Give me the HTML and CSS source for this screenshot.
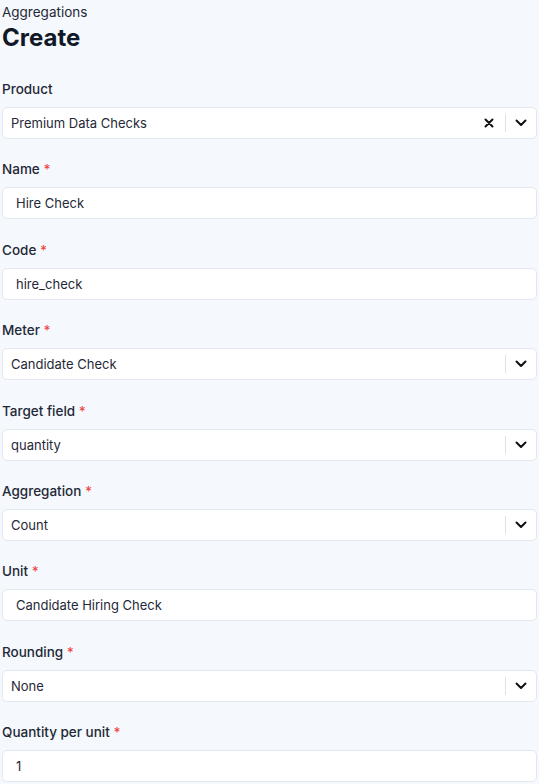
FILE: index.html
```html
<!DOCTYPE html>
<html lang="en">
<head>
  <meta charset="UTF-8" />
  <meta name="viewport" content="width=device-width, initial-scale=1" />
  <title>Create Aggregation</title>
  <link rel="stylesheet" href="styles.css">
</head>
<body>
  <div class="page">
    <div class="crumb">Aggregations</div>
    <h1 class="title">Create</h1>

    <form class="form" onsubmit="return false;">
      <div class="field">
        <label>Product</label>
        <div class="select">
          <span class="select-value">Premium Data Checks</span>
          <span class="clear">
            <svg width="10" height="10" viewBox="0 0 10 10"><path d="M1.5 1.5l7 7M8.5 1.5l-7 7" stroke="#111" stroke-width="2" stroke-linecap="round"/></svg>
          </span>
          <span class="sep"></span>
          <span class="chev">
            <svg width="12" height="8" viewBox="0 0 12 8"><path d="M1.5 1.5l4.5 4.5 4.5-4.5" fill="none" stroke="#111" stroke-width="2" stroke-linecap="round" stroke-linejoin="round"/></svg>
          </span>
        </div>
      </div>

      <div class="field">
        <label>Name <span class="req">*</span></label>
        <input class="input" type="text" value="Hire Check" />
      </div>

      <div class="field">
        <label>Code <span class="req">*</span></label>
        <input class="input" type="text" value="hire_check" />
      </div>

      <div class="field">
        <label>Meter <span class="req">*</span></label>
        <div class="select">
          <span class="select-value">Candidate Check</span>
          <span class="sep"></span>
          <span class="chev">
            <svg width="12" height="8" viewBox="0 0 12 8"><path d="M1.5 1.5l4.5 4.5 4.5-4.5" fill="none" stroke="#111" stroke-width="2" stroke-linecap="round" stroke-linejoin="round"/></svg>
          </span>
        </div>
      </div>

      <div class="field">
        <label>Target field <span class="req">*</span></label>
        <div class="select">
          <span class="select-value">quantity</span>
          <span class="sep"></span>
          <span class="chev">
            <svg width="12" height="8" viewBox="0 0 12 8"><path d="M1.5 1.5l4.5 4.5 4.5-4.5" fill="none" stroke="#111" stroke-width="2" stroke-linecap="round" stroke-linejoin="round"/></svg>
          </span>
        </div>
      </div>

      <div class="field">
        <label>Aggregation <span class="req">*</span></label>
        <div class="select">
          <span class="select-value">Count</span>
          <span class="sep"></span>
          <span class="chev">
            <svg width="12" height="8" viewBox="0 0 12 8"><path d="M1.5 1.5l4.5 4.5 4.5-4.5" fill="none" stroke="#111" stroke-width="2" stroke-linecap="round" stroke-linejoin="round"/></svg>
          </span>
        </div>
      </div>

      <div class="field">
        <label>Unit <span class="req">*</span></label>
        <input class="input" type="text" value="Candidate Hiring Check" />
      </div>

      <div class="field">
        <label>Rounding <span class="req">*</span></label>
        <div class="select">
          <span class="select-value">None</span>
          <span class="sep"></span>
          <span class="chev">
            <svg width="12" height="8" viewBox="0 0 12 8"><path d="M1.5 1.5l4.5 4.5 4.5-4.5" fill="none" stroke="#111" stroke-width="2" stroke-linecap="round" stroke-linejoin="round"/></svg>
          </span>
        </div>
      </div>

      <div class="field">
        <label>Quantity per unit <span class="req">*</span></label>
        <input class="input" type="text" value="1" />
      </div>
    </form>
  </div>
</body>
</html>
```

FILE: styles.css
```css
body {
  margin: 0;
  background: #f5f8fc;
  font-family: Inter, "Noto Sans", sans-serif;
  color: #1f2937;
}
.page {
  padding: 2px;
}
.crumb {
  font-size: 13.5px;
  line-height: 20px;
  color: #1f2937;
}
.title {
  margin: 0;
  font-size: 24px;
  line-height: 32px;
  font-weight: 700;
  color: #111827;
}
.form {
  margin-top: 25px;
  display: flex;
  flex-direction: column;
  gap: 20.4px;
}
.field {
  display: flex;
  flex-direction: column;
  gap: 8px;
}
label {
  font-size: 13.5px;
  line-height: 20px;
  font-weight: 500;
  color: #1f2937;
}
.req {
  color: #ef4444;
}
.input, .select {
  box-sizing: border-box;
  width: 100%;
  height: 32px;
  background: #fff;
  border: 1px solid #e2e8f0;
  border-radius: 5px;
  font-family: inherit;
  font-size: 13px;
  color: #1f2937;
}
.input {
  padding: 0 13px;
  outline: none;
}
.select {
  display: flex;
  align-items: center;
  padding-left: 8px;
}
.select-value {
  flex: 1;
}
.clear {
  display: flex;
  align-items: center;
  padding: 0 11px;
}
.sep {
  width: 1px;
  height: 18px;
  background: #dde3ec;
}
.chev {
  display: flex;
  align-items: center;
  justify-content: center;
  width: 30px;
}
```
